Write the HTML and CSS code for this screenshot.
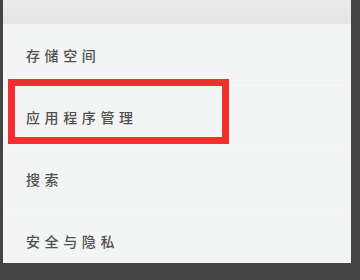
FILE: index.html
```html
<!DOCTYPE html>
<html lang="zh">
<head>
<meta charset="utf-8">
<link rel="stylesheet" href="styles.css">
</head>
<body>
<div class="screen">
  <div class="header"></div>
  <ul class="list">
    <li class="row">存储空间</li>
    <li class="row">应用程序管理</li>
    <li class="row">搜索</li>
    <li class="row">安全与隐私</li>
  </ul>
  <div class="highlight"></div>
</div>
</body>
</html>
```

FILE: styles.css
```css
html, body {
  margin: 0;
  padding: 0;
  background: #444444;
  width: 360px;
  height: 280px;
  overflow: hidden;
}
.screen {
  position: relative;
  margin-left: 3px;
  width: 348px;
  height: 263px;
  background: #f3f4f4;
  overflow: hidden;
}
.header {
  height: 24px;
  background: linear-gradient(#ebebeb, #e5e5e5);
}
.list {
  list-style: none;
  margin: 0;
  padding: 0;
}
.row {
  height: 62px;
  display: flex;
  align-items: center;
  padding-left: 23px;
  box-sizing: border-box;
  border-bottom: 1px solid #f8f8f8;
  font-family: "Noto Sans CJK SC", "Noto Sans", sans-serif;
  font-size: 14px;
  font-weight: 500;
  letter-spacing: 4.6px;
  color: #505050;
}
.highlight {
  position: absolute;
  left: 5px;
  top: 79px;
  width: 221px;
  height: 65px;
  box-sizing: border-box;
  border: 7px solid #f0302f;
}
```
